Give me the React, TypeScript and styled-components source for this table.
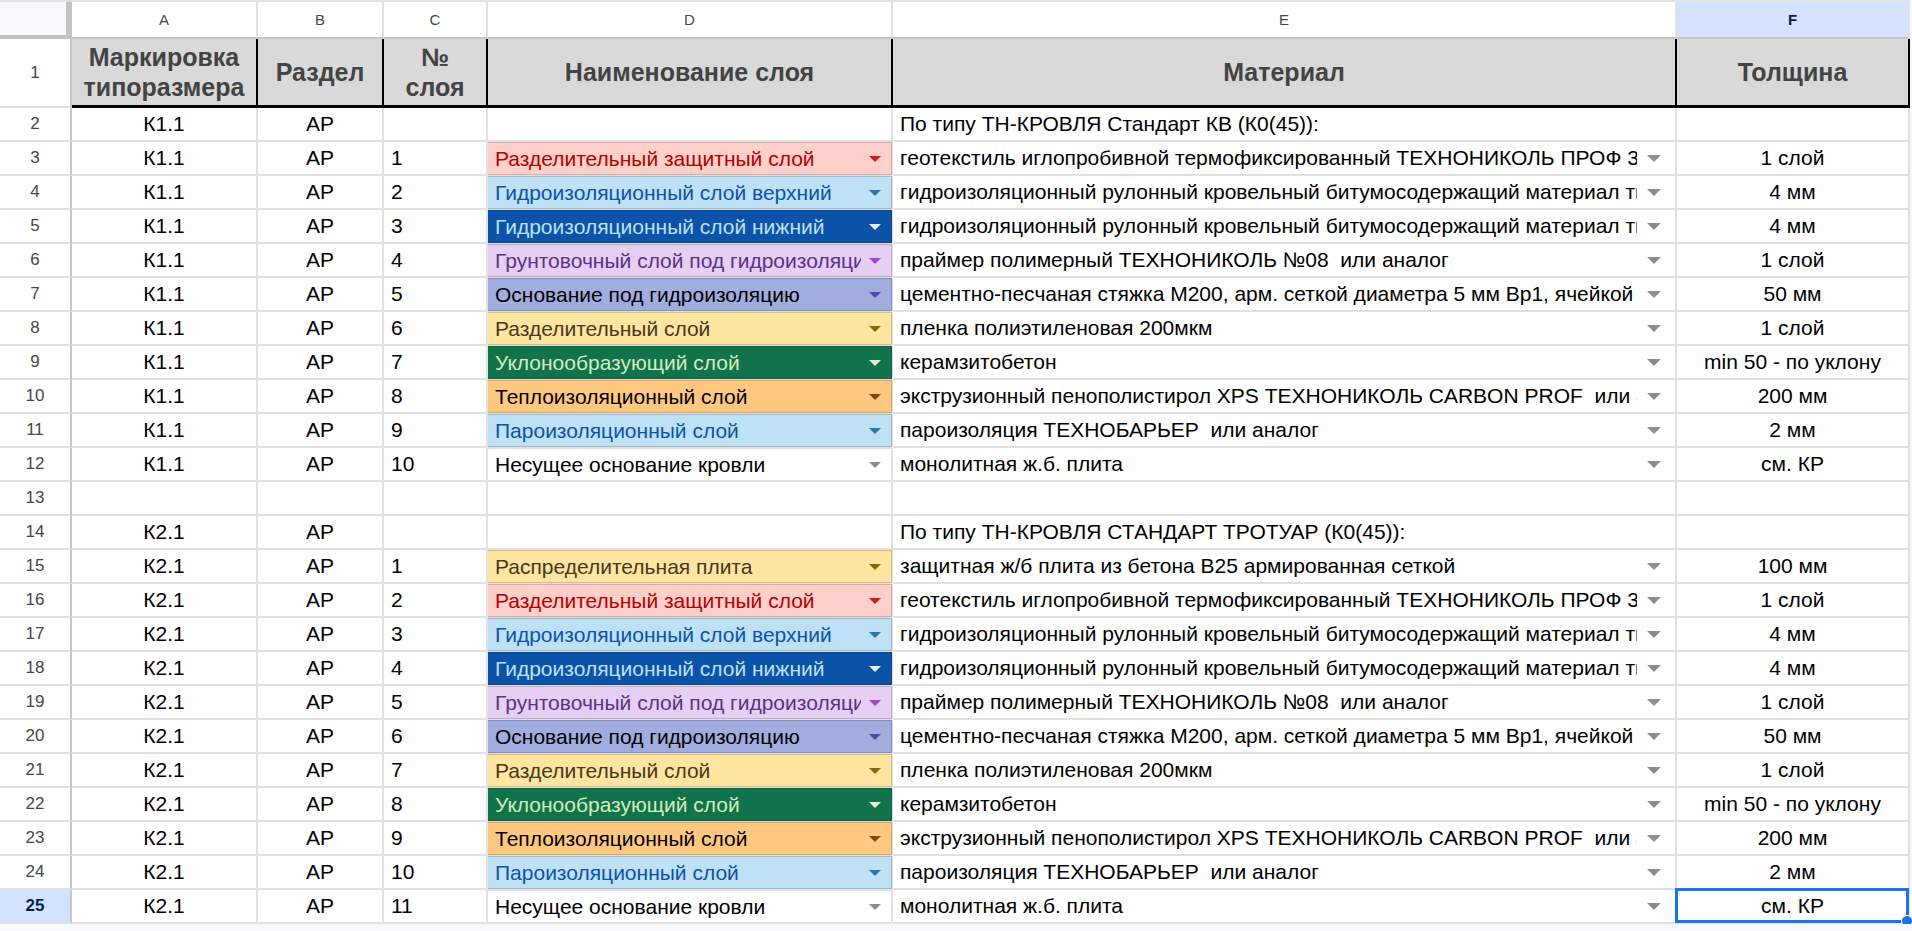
import React from 'react';
import styled, { createGlobalStyle } from 'styled-components';

const GlobalStyle = createGlobalStyle`
    html, body {
        margin: 0;
        padding: 0;
        background-color: #f8f9fa;
        font-family: "Liberation Sans", Arial, sans-serif;
    }
`;

const COLUMNS = [72, 186, 126, 104, 405, 784, 233];
const LETTERS = ['A', 'B', 'C', 'D', 'E', 'F'];
const GRID = '#e1e1e1';

const tones = {
    red: { bg: '#ffcfc9', fg: '#b10202', caret: '#c5221f' },
    sky: { bg: '#bfe1f6', fg: '#0a53a8', caret: '#2a76b0' },
    navy: { bg: '#0a53a8', fg: '#bfe1f6', caret: '#e3f1fc' },
    lilac: { bg: '#e6cff2', fg: '#5a3286', caret: '#a83fd6' },
    periwinkle: { bg: '#a1acdf', fg: '#000000', caret: '#3f51a8' },
    sand: { bg: '#ffe5a0', fg: '#473821', caret: '#8a6510' },
    green: { bg: '#11734b', fg: '#d4edbc', caret: '#e4f3d6' },
    orange: { bg: '#ffc880', fg: '#000000', caret: '#7a4a0c' },
    plain: { bg: '#ffffff', fg: '#000000', caret: '#8d8d8d' },
};

type Tone = keyof typeof tones;

interface Layer {
    name: string,
    tone: Tone,
    material: string,
    thickness: string
}

const roofLayers: Layer[] = [
    { name: 'Разделительный защитный слой', tone: 'red', material: 'геотекстиль иглопробивной термофиксированный ТЕХНОНИКОЛЬ ПРОФ 300 или аналог', thickness: '1 слой' },
    { name: 'Гидроизоляционный слой верхний', tone: 'sky', material: 'гидроизоляционный рулонный кровельный битумосодержащий материал типа ТЕХНОЭЛАСТ ЭКП', thickness: '4 мм' },
    { name: 'Гидроизоляционный слой нижний', tone: 'navy', material: 'гидроизоляционный рулонный кровельный битумосодержащий материал типа ТЕХНОЭЛАСТ ЭПП', thickness: '4 мм' },
    { name: 'Грунтовочный слой под гидроизоляцию', tone: 'lilac', material: 'праймер полимерный ТЕХНОНИКОЛЬ №08  или аналог', thickness: '1 слой' },
    { name: 'Основание под гидроизоляцию', tone: 'periwinkle', material: 'цементно-песчаная стяжка М200, арм. сеткой диаметра 5 мм Вр1, ячейкой 100х100 мм', thickness: '50 мм' },
    { name: 'Разделительный слой', tone: 'sand', material: 'пленка полиэтиленовая 200мкм', thickness: '1 слой' },
    { name: 'Уклонообразующий слой', tone: 'green', material: 'керамзитобетон', thickness: 'min 50 - по уклону' },
    { name: 'Теплоизоляционный слой', tone: 'orange', material: 'экструзионный пенополистирол XPS ТЕХНОНИКОЛЬ CARBON PROF  или аналог', thickness: '200 мм' },
    { name: 'Пароизоляционный слой', tone: 'sky', material: 'пароизоляция ТЕХНОБАРЬЕР  или аналог', thickness: '2 мм' },
    { name: 'Несущее основание кровли', tone: 'plain', material: 'монолитная ж.б. плита', thickness: 'см. КР' },
];

const walkwayLayers: Layer[] = [
    { name: 'Распределительная плита', tone: 'sand', material: 'защитная ж/б плита из бетона В25 армированная сеткой', thickness: '100 мм' },
    ...roofLayers,
];

interface Row {
    mark: string,
    section: string,
    number: string,
    layer?: Layer,
    title?: string
}

const rows: Row[] = [
    { mark: 'К1.1', section: 'АР', number: '', title: 'По типу ТН-КРОВЛЯ Стандарт КВ (К0(45)):' },
    ...roofLayers.map((layer, i) => ({ mark: 'К1.1', section: 'АР', number: String(i + 1), layer })),
    { mark: '', section: '', number: '' },
    { mark: 'К2.1', section: 'АР', number: '', title: 'По типу ТН-КРОВЛЯ СТАНДАРТ ТРОТУАР (К0(45)):' },
    ...walkwayLayers.map((layer, i) => ({ mark: 'К2.1', section: 'АР', number: String(i + 1), layer })),
];

const App = () => {
    const lastRow = rows.length + 1;

    return (
        <>
            <GlobalStyle />
            <Sheet>
                <Corner />
                {LETTERS.map(letter => (
                    <ColHead key={letter} $active={letter === 'F'}>{letter}</ColHead>
                ))}

                <RowHead>1</RowHead>
                <TitleCell>Маркировка<br />типоразмера</TitleCell>
                <TitleCell>Раздел</TitleCell>
                <TitleCell>№<br />слоя</TitleCell>
                <TitleCell>Наименование слоя</TitleCell>
                <TitleCell>Материал</TitleCell>
                <TitleCell>Толщина</TitleCell>

                {rows.map((row, i) => {
                    const index = i + 2;
                    const tone = row.layer ? tones[row.layer.tone] : null;
                    const selected = index === lastRow;
                    return (
                        <React.Fragment key={index}>
                            <RowHead $active={selected}>{index}</RowHead>
                            <Cell $align="center">{row.mark}</Cell>
                            <Cell $align="center">{row.section}</Cell>
                            <Cell $align="left">{row.number}</Cell>
                            {row.layer && tone ? (
                                <LayerCell $bg={tone.bg} $fg={tone.fg}>
                                    <Clip>{row.layer.name}</Clip>
                                    <Caret $color={tone.caret} />
                                </LayerCell>
                            ) : (
                                <Cell $align="left" />
                            )}
                            {row.layer ? (
                                <MaterialCell>
                                    <Clip>{row.layer.material}</Clip>
                                    <Caret $color="#8d8d8d" $wide />
                                </MaterialCell>
                            ) : (
                                <Cell $align="left">{row.title}</Cell>
                            )}
                            <Cell $align="center">
                                {row.layer ? row.layer.thickness : ''}
                                {selected && (
                                    <Selection>
                                        <Handle />
                                    </Selection>
                                )}
                            </Cell>
                        </React.Fragment>
                    );
                })}
            </Sheet>
        </>
    );
};

export default App;

const Sheet = styled.div`
    display: grid;
    grid-template-columns: ${COLUMNS.map(w => `${w}px`).join(' ')};
    grid-template-rows: 37px 69px repeat(24, 34px);
    width: max-content;
    border-top: 2px solid #e3e3e3;
    background-color: #ffffff;
`;

const Corner = styled.div`
    box-sizing: border-box;
    background-color: #f8f9fa;
    border-right: 6px solid #c4c4c4;
    border-bottom: 6px solid #c4c4c4;
    margin-bottom: -2px;
    height: 39px;
`;

const ColHead = styled.div<{ $active?: boolean }>`
    box-sizing: border-box;
    display: flex;
    align-items: center;
    justify-content: center;
    background-color: ${p => (p.$active ? '#d3e3fd' : '#ffffff')};
    color: ${p => (p.$active ? '#041e49' : '#444746')};
    font-size: 15px;
    font-weight: ${p => (p.$active ? 700 : 400)};
    border-right: 2px solid ${GRID};
    border-bottom: 2px solid #c4c7c5;
`;

const RowHead = styled.div<{ $active?: boolean }>`
    box-sizing: border-box;
    display: flex;
    align-items: center;
    justify-content: center;
    background-color: ${p => (p.$active ? '#d3e3fd' : '#ffffff')};
    color: ${p => (p.$active ? '#041e49' : '#444746')};
    font-size: 17px;
    font-weight: ${p => (p.$active ? 700 : 400)};
    border-right: 2px solid #c4c7c5;
    border-bottom: 2px solid ${GRID};
`;

const TitleCell = styled.div`
    box-sizing: border-box;
    display: flex;
    align-items: center;
    justify-content: center;
    text-align: center;
    padding: 0 3px;
    background-color: #d9d9d9;
    color: #434343;
    font-size: 25px;
    font-weight: 700;
    line-height: 30px;
    border-right: 2px solid #000000;
    border-bottom: 3px solid #000000;
`;

const Cell = styled.div<{ $align: 'left' | 'center' }>`
    position: relative;
    box-sizing: border-box;
    display: flex;
    align-items: center;
    justify-content: ${p => (p.$align === 'center' ? 'center' : 'flex-start')};
    padding: 0 7px;
    color: #000000;
    font-size: 21px;
    white-space: nowrap;
    border-right: 2px solid ${GRID};
    border-bottom: 2px solid ${GRID};
`;

const LayerCell = styled.div<{ $bg: string, $fg: string }>`
    box-sizing: border-box;
    display: flex;
    align-items: center;
    gap: 8px;
    padding: 0 10px 0 7px;
    margin-left: -1px;
    background-color: ${p => p.$bg};
    background-clip: padding-box;
    color: ${p => p.$fg};
    font-size: 21px;
    border: 1px solid ${p => (p.$bg === '#ffffff' ? 'transparent' : `color-mix(in srgb, ${p.$bg} 82%, #000000)`)};
    box-shadow: 0 1px 0 ${GRID}, 1px 0 0 ${GRID};
    margin-right: 1px;
    margin-bottom: 1px;
`;

const MaterialCell = styled.div`
    box-sizing: border-box;
    display: flex;
    align-items: center;
    gap: 10px;
    padding: 0 14px 0 7px;
    color: #000000;
    font-size: 21px;
    border-right: 2px solid ${GRID};
    border-bottom: 2px solid ${GRID};
`;

const Clip = styled.span`
    flex: 1;
    min-width: 0;
    overflow: hidden;
    white-space: pre;
`;

const Caret = styled.span<{ $color: string, $wide?: boolean }>`
    flex: none;
    width: 0;
    height: 0;
    border-left: ${p => (p.$wide ? 7 : 6)}px solid transparent;
    border-right: ${p => (p.$wide ? 7 : 6)}px solid transparent;
    border-top: ${p => (p.$wide ? 7 : 6)}px solid ${p => p.$color};
`;

const Selection = styled.span`
    position: absolute;
    inset: -2px -1px -1px -2px;
    border: 3px solid #1a73e8;
    pointer-events: none;
`;

const Handle = styled.span`
    position: absolute;
    right: -7px;
    bottom: -7px;
    width: 10px;
    height: 10px;
    border-radius: 50%;
    background-color: #1a73e8;
    border: 1px solid #ffffff;
`;
